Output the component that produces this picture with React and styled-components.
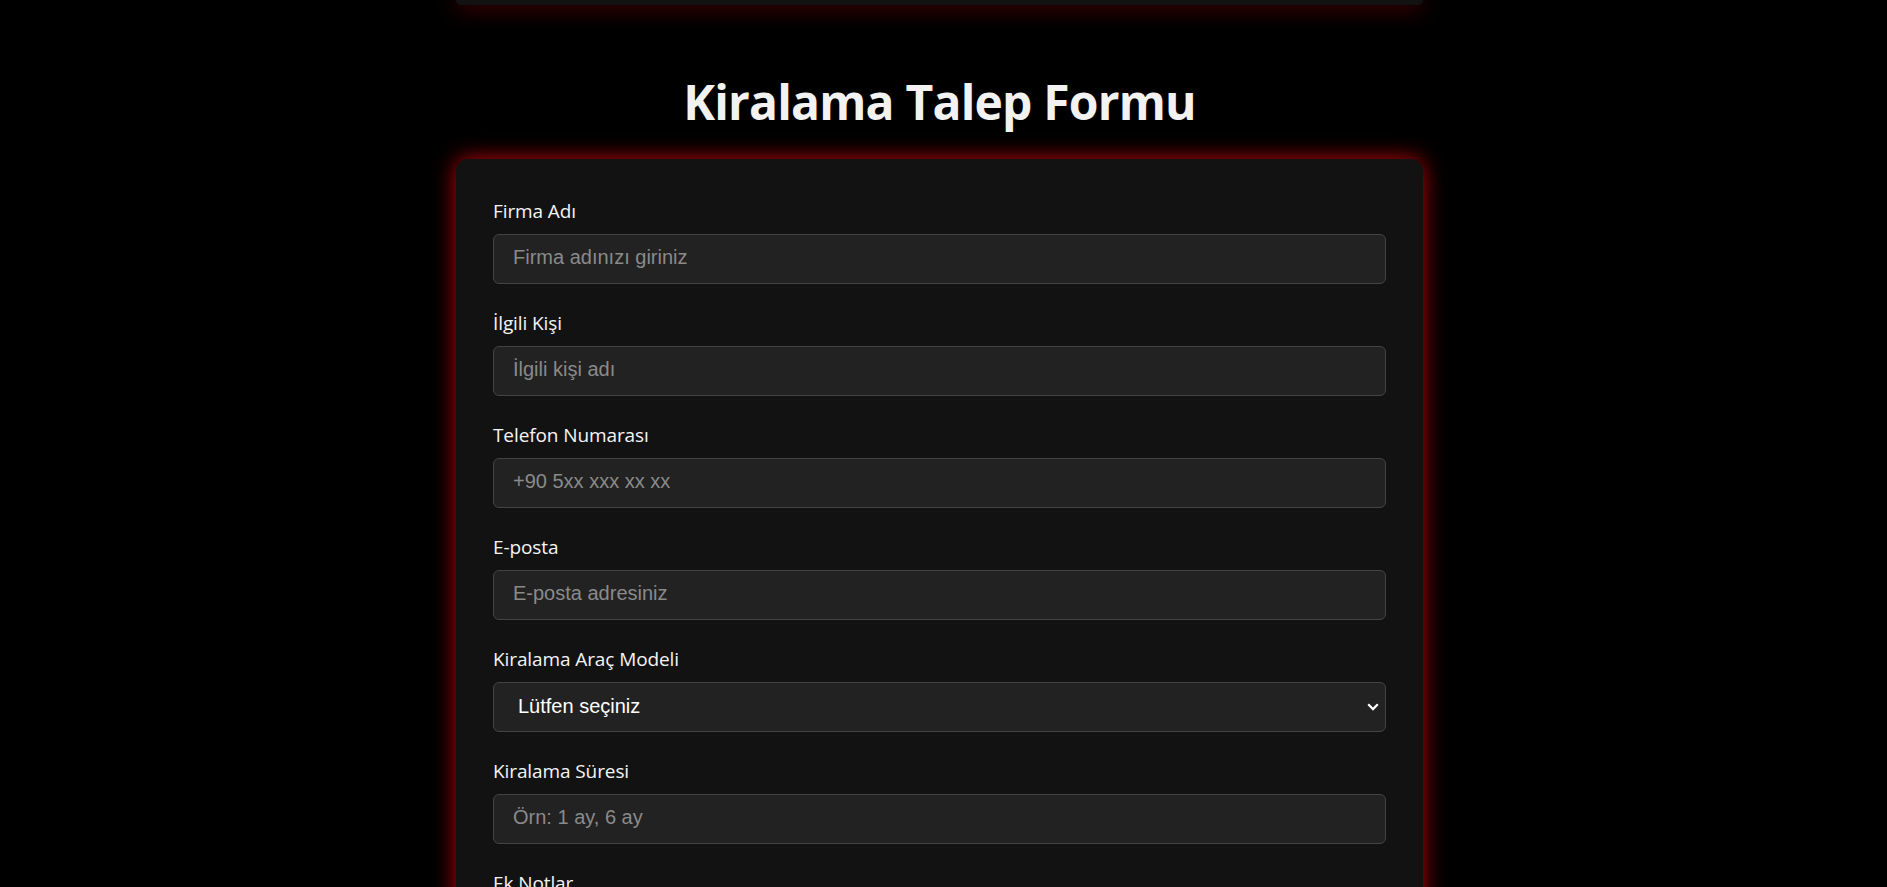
import styled, { createGlobalStyle } from "styled-components";

const GlobalStyle = createGlobalStyle`
  html, body {
    margin: 0;
    background: #000;
  }
  body {
    font-family: "Open Sans", "Noto Sans", sans-serif;
    color: #f2f2f2;
  }
`;

const Page = styled.div`
  padding: 0 8px 60px 0;
`;

const glow = "0 0 22px rgba(230, 0, 10, 0.85)";

const PrevCard = styled.div`
  width: 967px;
  height: 5px;
  margin: 0 auto;
  background: #121212;
  border-radius: 0 0 12px 12px;
  box-shadow: ${glow};
`;

const Title = styled.h1`
  margin: 68px 0 28px;
  text-align: center;
  font-size: 48px;
  line-height: 58px;
  letter-spacing: -0.8px;
  font-weight: 700;
  color: #f2f2f2;
`;

const FormCard = styled.form`
  width: 967px;
  box-sizing: border-box;
  margin: 0 auto;
  padding: 39px 37px 37px;
  background: #121212;
  border-radius: 12px;
  box-shadow: ${glow};
`;

const Field = styled.div`
  margin-bottom: 26px;
`;

const Label = styled.label`
  display: block;
  font-size: 19px;
  line-height: 27px;
  letter-spacing: -0.1px;
  margin-bottom: 9px;
  color: #f5f5f5;
`;

const controlBase = `
  display: block;
  width: 100%;
  box-sizing: border-box;
  height: 50px;
  border: 1px solid #444;
  border-radius: 6px;
  background: #222;
  color: #fff;
  font-family: "Liberation Sans", Arial, sans-serif;
  font-size: 20px;
  outline: none;
`;

const Input = styled.input`
  ${controlBase}
  padding: 0 19px 4px;
  &::placeholder {
    color: #8a8a8a;
  }
`;

const chevron =
  "data:image/svg+xml;utf8," +
  encodeURIComponent(
    '<svg xmlns="http://www.w3.org/2000/svg" width="12" height="8" viewBox="0 0 12 8"><path d="M1.2 1.3 6 6.1l4.8-4.8" fill="none" stroke="#fff" stroke-width="2.2"/></svg>'
  );

const Select = styled.select`
  ${controlBase}
  appearance: none;
  padding: 0 30px 2px 24px;
  background-image: url("${chevron}");
  background-repeat: no-repeat;
  background-position: right 6px center;
  background-size: 12px 8px;
`;

const TextArea = styled.textarea`
  ${controlBase}
  height: 140px;
  padding: 12px 19px;
  resize: vertical;
  &::placeholder {
    color: #8a8a8a;
  }
`;

const SubmitButton = styled.button`
  width: 100%;
  height: 56px;
  border: none;
  border-radius: 6px;
  background: #d10010;
  color: #fff;
  font-family: "Open Sans", sans-serif;
  font-size: 20px;
  font-weight: 700;
`;

const fields = [
  { label: "Firma Adı", placeholder: "Firma adınızı giriniz" },
  { label: "İlgili Kişi", placeholder: "İlgili kişi adı" },
  { label: "Telefon Numarası", placeholder: "+90 5xx xxx xx xx" },
  { label: "E-posta", placeholder: "E-posta adresiniz" },
];

export default function App() {
  return (
    <Page>
      <GlobalStyle />
      <PrevCard />
      <Title>Kiralama Talep Formu</Title>
      <FormCard onSubmit={(e) => e.preventDefault()}>
        {fields.map((f) => (
          <Field key={f.label}>
            <Label>{f.label}</Label>
            <Input placeholder={f.placeholder} />
          </Field>
        ))}
        <Field>
          <Label>Kiralama Araç Modeli</Label>
          <Select defaultValue="">
            <option value="">Lütfen seçiniz</option>
            <option value="binek">Binek Araç</option>
            <option value="ticari">Ticari Araç</option>
          </Select>
        </Field>
        <Field>
          <Label>Kiralama Süresi</Label>
          <Input placeholder="Örn: 1 ay, 6 ay" />
        </Field>
        <Field>
          <Label>Ek Notlar</Label>
          <TextArea placeholder="Eklemek istedikleriniz" />
        </Field>
        <SubmitButton type="submit">Gönder</SubmitButton>
      </FormCard>
    </Page>
  );
}
